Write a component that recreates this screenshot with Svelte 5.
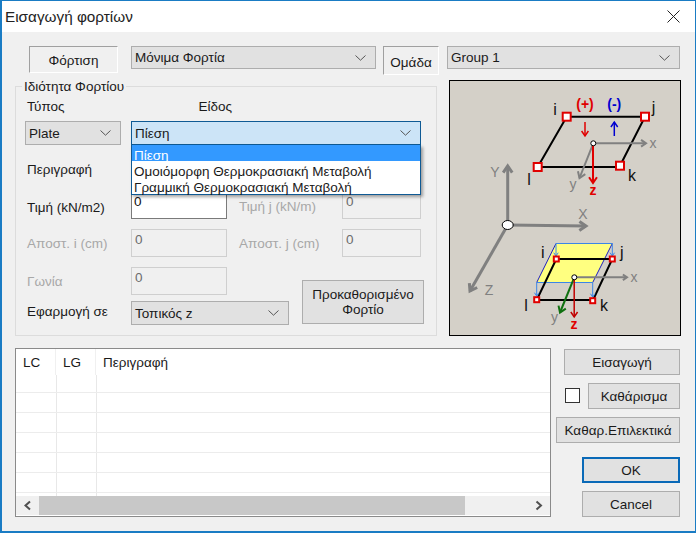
<script>
  const colHead = ['LC', 'LG', 'Περιγραφή'];
  const rows = [18, 20, 20, 20, 20, 20];
  const options = ['Πίεση', 'Ομοιόμορφη Θερμοκρασιακή Μεταβολή', 'Γραμμική Θερμοκρασιακή Μεταβολή'];
</script>

{#snippet chevron()}
  <svg class="chev" width="11" height="6" viewBox="0 0 11 6"><path d="M0.5 0.5 L5.5 5.2 L10.5 0.5" fill="none" stroke="#555" stroke-width="1"/></svg>
{/snippet}

{#snippet arrow(x1, y1, x2, y2, color, w, head)}
  {@const a = Math.atan2(y2 - y1, x2 - x1)}
  <line x1={x1} y1={y1} x2={x2} y2={y2} stroke={color} stroke-width={w}/>
  <path d="M{x2 - head * Math.cos(a - 0.6)} {y2 - head * Math.sin(a - 0.6)} L{x2} {y2} L{x2 - head * Math.cos(a + 0.6)} {y2 - head * Math.sin(a + 0.6)}" fill="none" stroke={color} stroke-width={w}/>
{/snippet}

<div class="window">
  <header class="titlebar">
    <span class="title">Εισαγωγή φορτίων</span>
    <svg class="close" width="13" height="13" viewBox="0 0 13 13"><path d="M0.5 0.5 L12.5 12.5 M12.5 0.5 L0.5 12.5" stroke="#222" stroke-width="1"/></svg>
  </header>

  <div class="content">
    <div class="toprow">
      <div class="tab tab-load">Φόρτιση</div>
      <div class="combo combo-case"><span>Μόνιμα Φορτία</span>{@render chevron()}</div>
      <div class="tab tab-group">Ομάδα</div>
      <div class="combo combo-group"><span>Group 1</span>{@render chevron()}</div>
    </div>

    <div class="midrow">
      <fieldset class="group">
        <legend>Ιδιότητα Φορτίου</legend>
        <div class="r-heads"><span class="h-type">Τύπος</span><span class="h-kind">Είδος</span></div>
        <div class="r-combos">
          <div class="combo combo-plate"><span>Plate</span>{@render chevron()}</div>
          <div class="kind-wrap">
            <div class="combo combo-kind"><span>Πίεση</span>{@render chevron()}</div>
            <ul class="dropdown">
              {#each options as o, i}
                <li class:sel={i === 0}>{o}</li>
              {/each}
            </ul>
          </div>
        </div>
        <div class="r-desc"><span class="lbl">Περιγραφή</span></div>
        <div class="r-field r-value">
          <span class="lbl lbl-low">Τιμή (kN/m2)</span>
          <input class="field active" value="0" />
          <span class="lbl2 off lbl-low j">Τιμή j (kN/m)</span>
          <input class="field small" value="0" disabled />
        </div>
        <div class="r-field">
          <span class="lbl off">Αποστ. i (cm)</span>
          <input class="field" value="0" disabled />
          <span class="lbl2 off">Αποστ. j (cm)</span>
          <input class="field small" value="0" disabled />
        </div>
        <div class="r-bottom">
          <div class="b-left">
            <div class="r-field">
              <span class="lbl off">Γωνία</span>
              <input class="field" value="0" disabled />
            </div>
            <div class="r-apply">
              <span class="lbl">Εφαρμογή σε</span>
              <div class="combo combo-apply"><span>Τοπικός z</span>{@render chevron()}</div>
            </div>
          </div>
          <button class="btn btn-preset">Προκαθορισμένο<br />Φορτίο</button>
        </div>
      </fieldset>

      <svg class="diagram" width="232" height="256" viewBox="449 80 232 256">
        <rect x="449.5" y="80.5" width="231" height="255" fill="#d4d0c8" stroke="#000"/>
        <!-- global axes -->
        {@render arrow(507.7, 225, 507.7, 166, '#808080', 3, 8)}
        {@render arrow(507.7, 225, 586, 226, '#808080', 3, 8)}
        {@render arrow(507.7, 225, 470, 291, '#808080', 3, 8)}
        <ellipse cx="507.7" cy="225" rx="5.5" ry="4.5" fill="#fff" stroke="#000"/>
        <text class="g" x="495" y="177" text-anchor="middle">Y</text>
        <text class="g" x="583" y="219" text-anchor="middle">X</text>
        <text class="g" x="489" y="295" text-anchor="middle">Z</text>

        <!-- upper plate -->
        <path d="M566.7 116.7 H645 L620 165.7 M620 167 H537.7 L566.7 116.7" fill="none" stroke="#000" stroke-width="2"/>
        {@render arrow(593.3, 143.3, 646, 143.3, '#808080', 2, 6)}
        {@render arrow(593.3, 143.3, 579.5, 178, '#808080', 2, 7)}
        {@render arrow(593, 143.3, 593, 183, '#e00000', 2, 7)}
        <circle cx="593.3" cy="143.3" r="2.5" fill="#fff" stroke="#000"/>
        {@render arrow(585, 122, 585, 136, '#e00000', 1.5, 6)}
        {@render arrow(614.3, 136, 614.3, 122, '#0000d0', 1.5, 6)}
        {#each [[566.7,116.7],[645,116.7],[537.7,167],[620,165.7]] as [x,y]}
          <rect x={x-4} y={y-4} width="8" height="8" fill="#fff" stroke="#e00000" stroke-width="2"/>
        {/each}
        <text class="k" x="555" y="115" text-anchor="middle">i</text>
        <text class="k" x="653.5" y="113" text-anchor="middle">j</text>
        <text class="k" x="529" y="185" text-anchor="middle">l</text>
        <text class="k" x="632" y="181" text-anchor="middle">k</text>
        <text class="b red" x="585" y="109" text-anchor="middle">(+)</text>
        <text class="b blue" x="614.3" y="109" text-anchor="middle">(-)</text>
        <text class="g" x="653" y="148" text-anchor="middle">x</text>
        <text class="g" x="573" y="189" text-anchor="middle">y</text>
        <text class="b red" x="593" y="195" text-anchor="middle">z</text>

        <!-- lower plate -->
        <path d="M556 243.5 H612.3 L592.7 282.5 H536.7 Z" fill="#ffff80"/>
        <path d="M556 243.5 L536.7 282.5 M612.3 243.5 L592.7 282.5" stroke="#2020c0" fill="none"/>
        <path d="M556 243.5 H612.3 M536.7 282.5 H592.7" stroke="#3a86e8" fill="none"/>
        <path d="M556.3 259 H612.3 L592.7 300.7 M592.7 300 H536.7 L556.3 259" fill="none" stroke="#000" stroke-width="2"/>
        {@render arrow(556, 243.5, 556, 256, '#3a86e8', 1, 4)}
        {@render arrow(612.3, 243.5, 612.3, 256, '#3a86e8', 1, 4)}
        {@render arrow(536.7, 282.5, 536.7, 296, '#3a86e8', 1, 4)}
        {@render arrow(592.7, 282.5, 592.7, 297, '#3a86e8', 1, 4)}
        {@render arrow(574.3, 277.3, 627, 277.3, '#808080', 2, 5)}
        {@render arrow(574.3, 277.3, 560, 312.5, '#107010', 2, 7)}
        {@render arrow(574.2, 277.3, 574.2, 317, '#c00000', 1.5, 6)}
        <circle cx="574.3" cy="277.3" r="2.5" fill="#fff" stroke="#000"/>
        {#each [[556.3,259],[612.3,259],[592.7,300.7],[536.7,299.7]] as [x,y]}
          <rect x={x-2.5} y={y-2.5} width="5" height="5" fill="#fff" stroke="#e00000" stroke-width="2"/>
        {/each}
        <text class="k" x="542.7" y="258" text-anchor="middle">i</text>
        <text class="k" x="621.7" y="258" text-anchor="middle">j</text>
        <text class="k" x="526" y="311" text-anchor="middle">l</text>
        <text class="k" x="604" y="311" text-anchor="middle">k</text>
        <text class="g" x="634" y="282" text-anchor="middle">x</text>
        <text class="g" x="554.5" y="322" text-anchor="middle">y</text>
        <text class="b red" x="574" y="329" text-anchor="middle">z</text>
      </svg>
    </div>

    <div class="botrow">
      <div class="list">
        <div class="l-head">
          {#each colHead as c, i}<div class="cell c{i}">{c}</div>{/each}
        </div>
        <div class="l-body">
          {#each rows as h}
            <div class="l-row" style="height:{h}px">
              <div class="cell c0"></div><div class="cell c1"></div><div class="cell c2"></div>
            </div>
          {/each}
          <div class="l-row tail"><div class="cell c0"></div><div class="cell c1"></div><div class="cell c2"></div></div>
        </div>
        <div class="hscroll">
          <svg width="23" height="19" viewBox="0 0 23 19"><path d="M14 5.5 L9.5 9.5 L14 13.5" fill="none" stroke="#505050" stroke-width="2"/></svg>
          <div class="thumb"></div>
          <div class="track"></div>
          <svg width="23" height="19" viewBox="0 0 23 19"><path d="M9.5 5.5 L14 9.5 L9.5 13.5" fill="none" stroke="#505050" stroke-width="2"/></svg>
        </div>
      </div>

      <div class="actions">
        <button class="btn a-insert">Εισαγωγή</button>
        <div class="a-clear">
          <span class="check"></span>
          <button class="btn a-clearbtn">Καθάρισμα</button>
        </div>
        <button class="btn a-sel">Καθαρ.Επιλεκτικά</button>
        <button class="btn a-ok">OK</button>
        <button class="btn a-cancel">Cancel</button>
      </div>
    </div>
  </div>
</div>

<style>
  :global(body) { margin: 0; background: #f0f0f0; }
  .window {
    width: 696px; height: 533px; box-sizing: border-box;
    border: solid #1a7cc4; border-width: 1px 1px 2px 2px;
    background: #f0f0f0; display: flex; flex-direction: column;
    font: 13.5px/15px "Liberation Sans", Arial, sans-serif; color: #1a1a1a;
  }
  .titlebar {
    height: 31px; flex: none; background: #fff; display: flex; align-items: center;
    justify-content: space-between; padding: 0 15px 0 3px;
  }
  .title { font-size: 15.3px; color: #222; }
  .content { padding-left: 13px; }

  .toprow { display: flex; align-items: flex-start; padding: 14px 0 0 14px; height: 34px; }
  .tab {
    box-sizing: border-box; display: flex; align-items: center; justify-content: center;
    border: 1px solid #fff; border-top-color: #a0a0a0; border-left-color: #a0a0a0; padding-top: 1px;
  }
  .tab-load { width: 89px; height: 27px; margin-right: 13px; }
  .tab-group { width: 56px; height: 29px; margin: 0 8px 0 7px; padding-top: 4px; }

  .combo {
    box-sizing: border-box; display: flex; align-items: center; justify-content: space-between;
    height: 24px; background: #e1e1e1; border: 1px solid #adadad; padding: 0 9px 0 3px; flex: none;
  }
  .chev { flex: none; }
  .toprow .combo { height: 23px; }
  .toprow .combo span { margin-top: -1px; }
  .combo-case { width: 245px; }
  .combo-group { width: 233px; }
  .combo-plate { width: 96px; }
  .combo-kind { width: 290px; background: #cce4f7; border-color: #0f5a94; }
  .combo-apply { width: 158px; }
  .combo-apply span { margin-top: 1px; }

  .midrow { display: flex; align-items: flex-start; height: 268px; }
  .group {
    width: 422px; height: 256px; box-sizing: border-box; margin: 0; padding: 0;
    border: 1px solid #dcdcdc; min-width: 0;
  }
  legend { margin-left: 6px; padding: 0 2px; line-height: 13px; }
  .diagram { margin-left: 12px; flex: none; display: block; }

  .r-heads { display: flex; padding-top: 6px; height: 22px; box-sizing: content-box; }
  .h-type { margin-left: 11px; }
  .h-kind { margin-left: 134px; }
  .r-combos { display: flex; gap: 10px; padding-left: 9px; }
  .kind-wrap { position: relative; }
  .dropdown {
    position: absolute; z-index: 5; left: 0; top: 24px; width: 290px; height: 50px; box-sizing: border-box;
    margin: 0; padding: 0; list-style: none; background: #fff;
    border: 1px solid #0f5a94; border-top: 0;
    box-shadow: 2px 2px 3px rgba(0,0,0,.35);
  }
  .dropdown li { height: 16px; line-height: 21px; padding-left: 2px; white-space: nowrap; }
  .dropdown li.sel { background: #3399ff; color: #fff; }

  .r-desc { height: 46px; padding-left: 11px; display: flex; align-items: center; }
  .r-desc .lbl { margin-top: 2px; }

  .r-field { display: flex; align-items: center; height: 38px; padding-left: 11px; }
  .lbl { width: 104px; flex: none; margin-top: -9px; white-space: nowrap; }
  .lbl-low { margin-top: -5px; }
  .lbl2 { width: 103px; flex: none; margin: -9px 0 0 12px; white-space: nowrap; }
  .lbl2.lbl-low { margin-top: -5px; }
  .lbl2.j { margin-top: -7px; }
  .off { color: #a8a8a8; }
  .field {
    width: 96px; height: 28px; box-sizing: border-box; flex: none; margin: 0 0 10px 0;
    border: 1px solid #cfcfcf; background: #f0f0f0; padding: 0 3px 7px;
    font: inherit; color: #6d6d6d; outline: none; border-radius: 0;
  }
  .field.small { width: 79px; }
  .field.active { background: #fff; color: #111; border-color: #7a7a7a; padding-left: 2px; }

  .r-bottom { display: flex; position: relative; }
  .b-left { width: 286px; flex: none; }
  .r-apply { display: flex; align-items: center; padding-left: 11px; margin-top: -4px; }
  .r-apply .lbl { margin-top: -3px; }

  .btn {
    box-sizing: border-box; background: #e1e1e1; border: 1px solid #adadad; padding: 0; margin: 0;
    font: inherit; color: #1a1a1a; display: block; border-radius: 0;
  }
  .btn-preset { width: 122px; height: 44px; margin-top: 13px; flex: none; }

  .botrow { display: flex; align-items: flex-start; }
  .list {
    width: 536px; height: 169px; box-sizing: border-box; background: #fff;
    border: 1px solid #8a8a8a; display: flex; flex-direction: column; flex: none;
  }
  .l-head { display: flex; height: 26px; flex: none; }
  .l-head .cell { display: flex; align-items: center; padding-left: 7px; box-sizing: border-box; border-right: 1px solid #f0f0f0; }
  .cell { flex: none; box-sizing: border-box; }
  .c0 { width: 40px; }
  .c1 { width: 40px; }
  .c2 { flex: 1; border-right: 0 !important; }
  .l-body { flex: 1; overflow: hidden; }
  .l-row { display: flex; box-sizing: border-box; border-bottom: 1px solid #ececec; }
  .l-row .c0, .l-row .c1 { border-right: 1px solid #e8e8e8; }
  .l-row .c0 { width: 41px; }
  .l-row.tail { height: 3px; border: 0; }
  .hscroll { height: 19px; flex: none; display: flex; background: #f0f0f0; margin-bottom: 1px; }
  .hscroll svg { flex: none; display: block; }
  .thumb { width: 426px; background: #c8c8c8; }
  .track { flex: 1; }

  .actions { width: 124px; margin-left: 5px; position: relative; flex: none; display: flex; flex-direction: column; align-items: flex-end; }
  .a-insert { width: 116px; height: 26px; margin-top: 1px; }
  .a-clear { display: flex; align-items: center; width: 115px; height: 26px; margin-top: 8px; justify-content: space-between; }
  .check { width: 15px; height: 15px; box-sizing: border-box; background: #fff; border: 1px solid #333; margin-top: -1px; }
  .a-clearbtn { width: 92px; height: 26px; }
  .a-sel { width: 124px; height: 26px; margin-top: 8px; }
  .a-ok { width: 98px; height: 26px; margin-top: 14px; border: 2px solid #0a6ab8; }
  .a-cancel { width: 98px; height: 26px; margin-top: 8px; }

  text { font-family: "Liberation Sans", Arial, sans-serif; }
  .k { font-size: 16px; fill: #111; }
  .g { font-size: 14px; fill: #808080; }
  .b { font-size: 14px; font-weight: bold; }
  .red { fill: #e00000; }
  .blue { fill: #0000d0; }
</style>
